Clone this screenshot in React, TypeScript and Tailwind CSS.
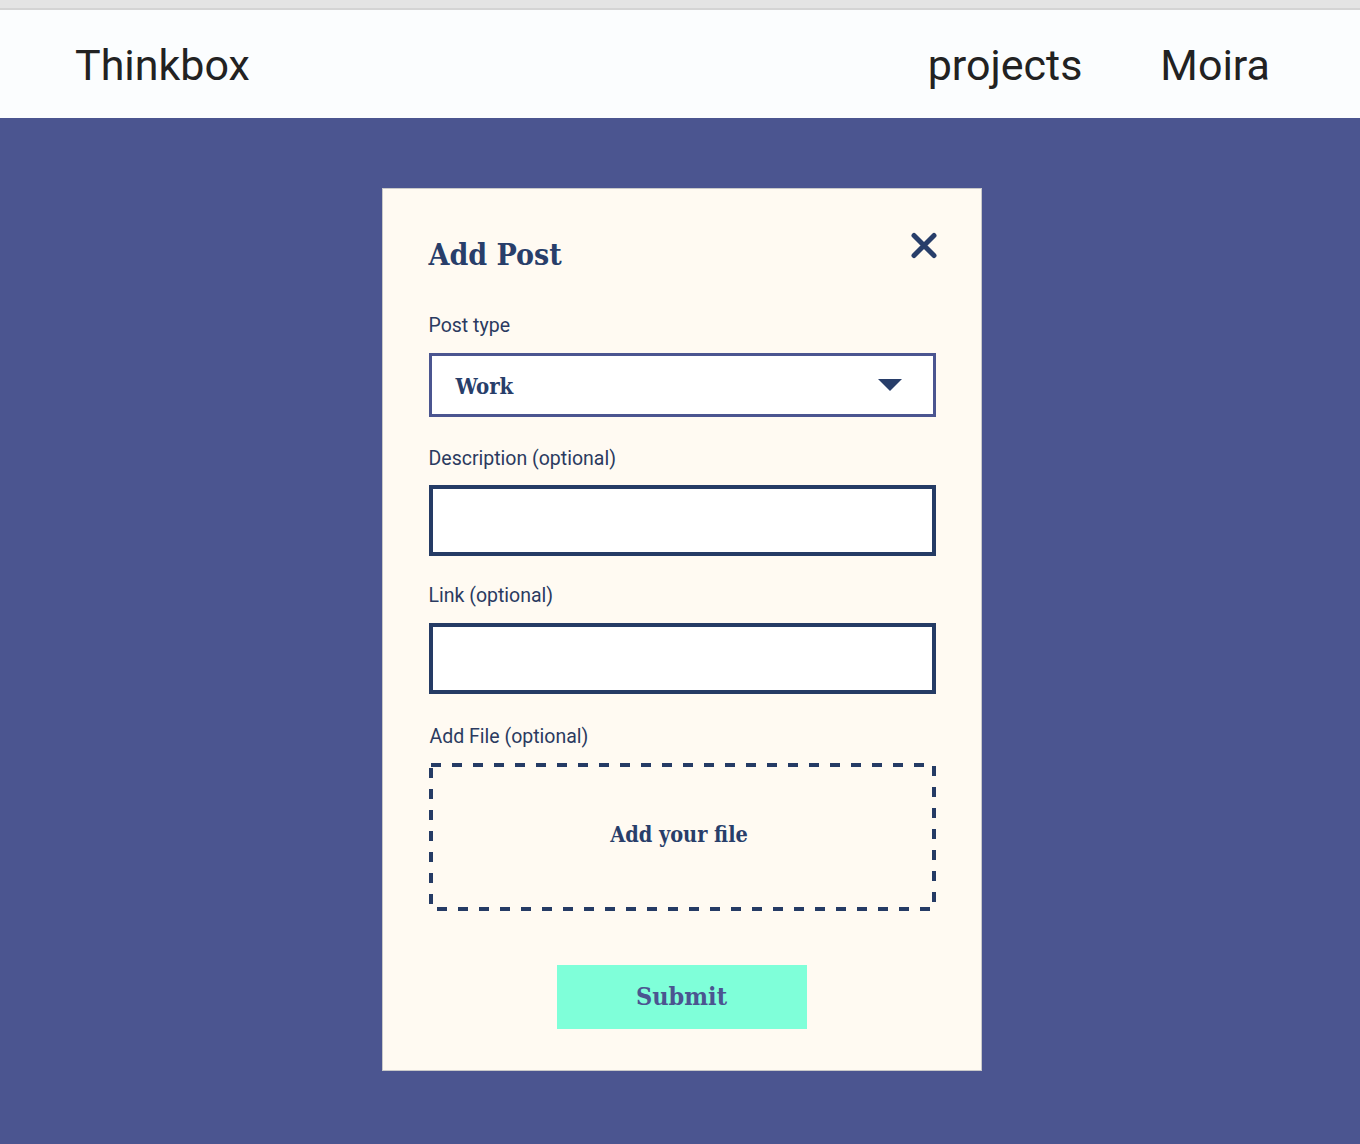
import React from "react";

const serif: React.CSSProperties = {
  fontFamily: '"DejaVu Serif Condensed", "DejaVu Serif", "Liberation Serif", serif',
  fontStretch: "condensed",
};

export default function App() {
  return (
    <div className="min-h-[1144px] w-full flex flex-col bg-[#4b5590]" style={{ fontFamily: 'Roboto, "Noto Sans", sans-serif' }}>
      <div className="h-[10px] bg-[#e4e4e4] border-b-2 border-[#d4d4d4]" />
      <header className="h-[108px] bg-[#fbfdfe] flex items-center justify-between pl-[75px] pr-[90px] pt-[3px]">
        <span className="text-[43px] text-[#222] leading-none">Thinkbox</span>
        <nav className="flex items-center gap-[78px] text-[43px] text-[#222] leading-none">
          <span>projects</span>
          <span>Moira</span>
        </nav>
      </header>
      <main className="flex justify-center pt-[70px] pb-[74px] pl-[3px]">
        <div className="w-[600px] h-[883px] bg-[#fffaf2] border border-[#c9c9c9] pt-[44px] px-[46px] flex flex-col">
          <div className="flex items-start justify-between">
            <h1 className="text-[30px] font-bold text-[#283e6a] leading-none mt-[7px]" style={serif}>Add Post</h1>
            <svg width="26" height="27" viewBox="0 0 26 27" className="mr-[-2px] mt-[-1px]">
              <path d="M3 3.5 L23 23.5 M23 3.5 L3 23.5" stroke="#283e6a" strokeWidth="5" strokeLinecap="round" />
            </svg>
          </div>
          <label className="mt-[46px] text-[19.5px] text-[#2b3a60] leading-none">Post type</label>
          <div className="mt-[17px] h-[64px] w-[507px] border-[3px] border-[#4b5590] bg-white flex items-center justify-between pl-[24px] pr-[31px]">
            <span className="text-[22px] font-bold text-[#283e6a] mt-[4px]" style={serif}>Work</span>
            <svg width="24" height="12" viewBox="0 0 24 12">
              <path d="M0 0 L24 0 L12 12 Z" fill="#283e6a" />
            </svg>
          </div>
          <label className="mt-[32px] text-[19.5px] text-[#2b3a60] leading-none">Description (optional)</label>
          <div className="mt-[17px] h-[71px] w-[507px] border-4 border-[#253b65] bg-white" />
          <label className="mt-[30px] text-[19.5px] text-[#2b3a60] leading-none">Link (optional)</label>
          <div className="mt-[17px] h-[71px] w-[507px] border-4 border-[#253b65] bg-white" />
          <label className="mt-[33px] ml-[1px] text-[19.5px] text-[#2b3a60] leading-none">Add File (optional)</label>
          <div className="relative mt-[17px] h-[148px] w-[507px] flex items-center justify-center">
            <svg className="absolute inset-0" width="507" height="148" viewBox="0 0 507 148">
              <rect x="2" y="2" width="503" height="144" fill="none" stroke="#253b65" strokeWidth="4" strokeDasharray="10 11" />
            </svg>
            <span className="relative text-[21.5px] font-bold text-[#283e6a] mr-[6px] mb-[4px]" style={serif}>Add your file</span>
          </div>
          <div className="mt-[54px] flex justify-center">
            <button className="w-[250px] h-[64px] bg-[#7fffd9] flex items-center justify-center text-[25px] font-bold text-[#4b5590]" style={serif}>
              Submit
            </button>
          </div>
        </div>
      </main>
    </div>
  );
}
